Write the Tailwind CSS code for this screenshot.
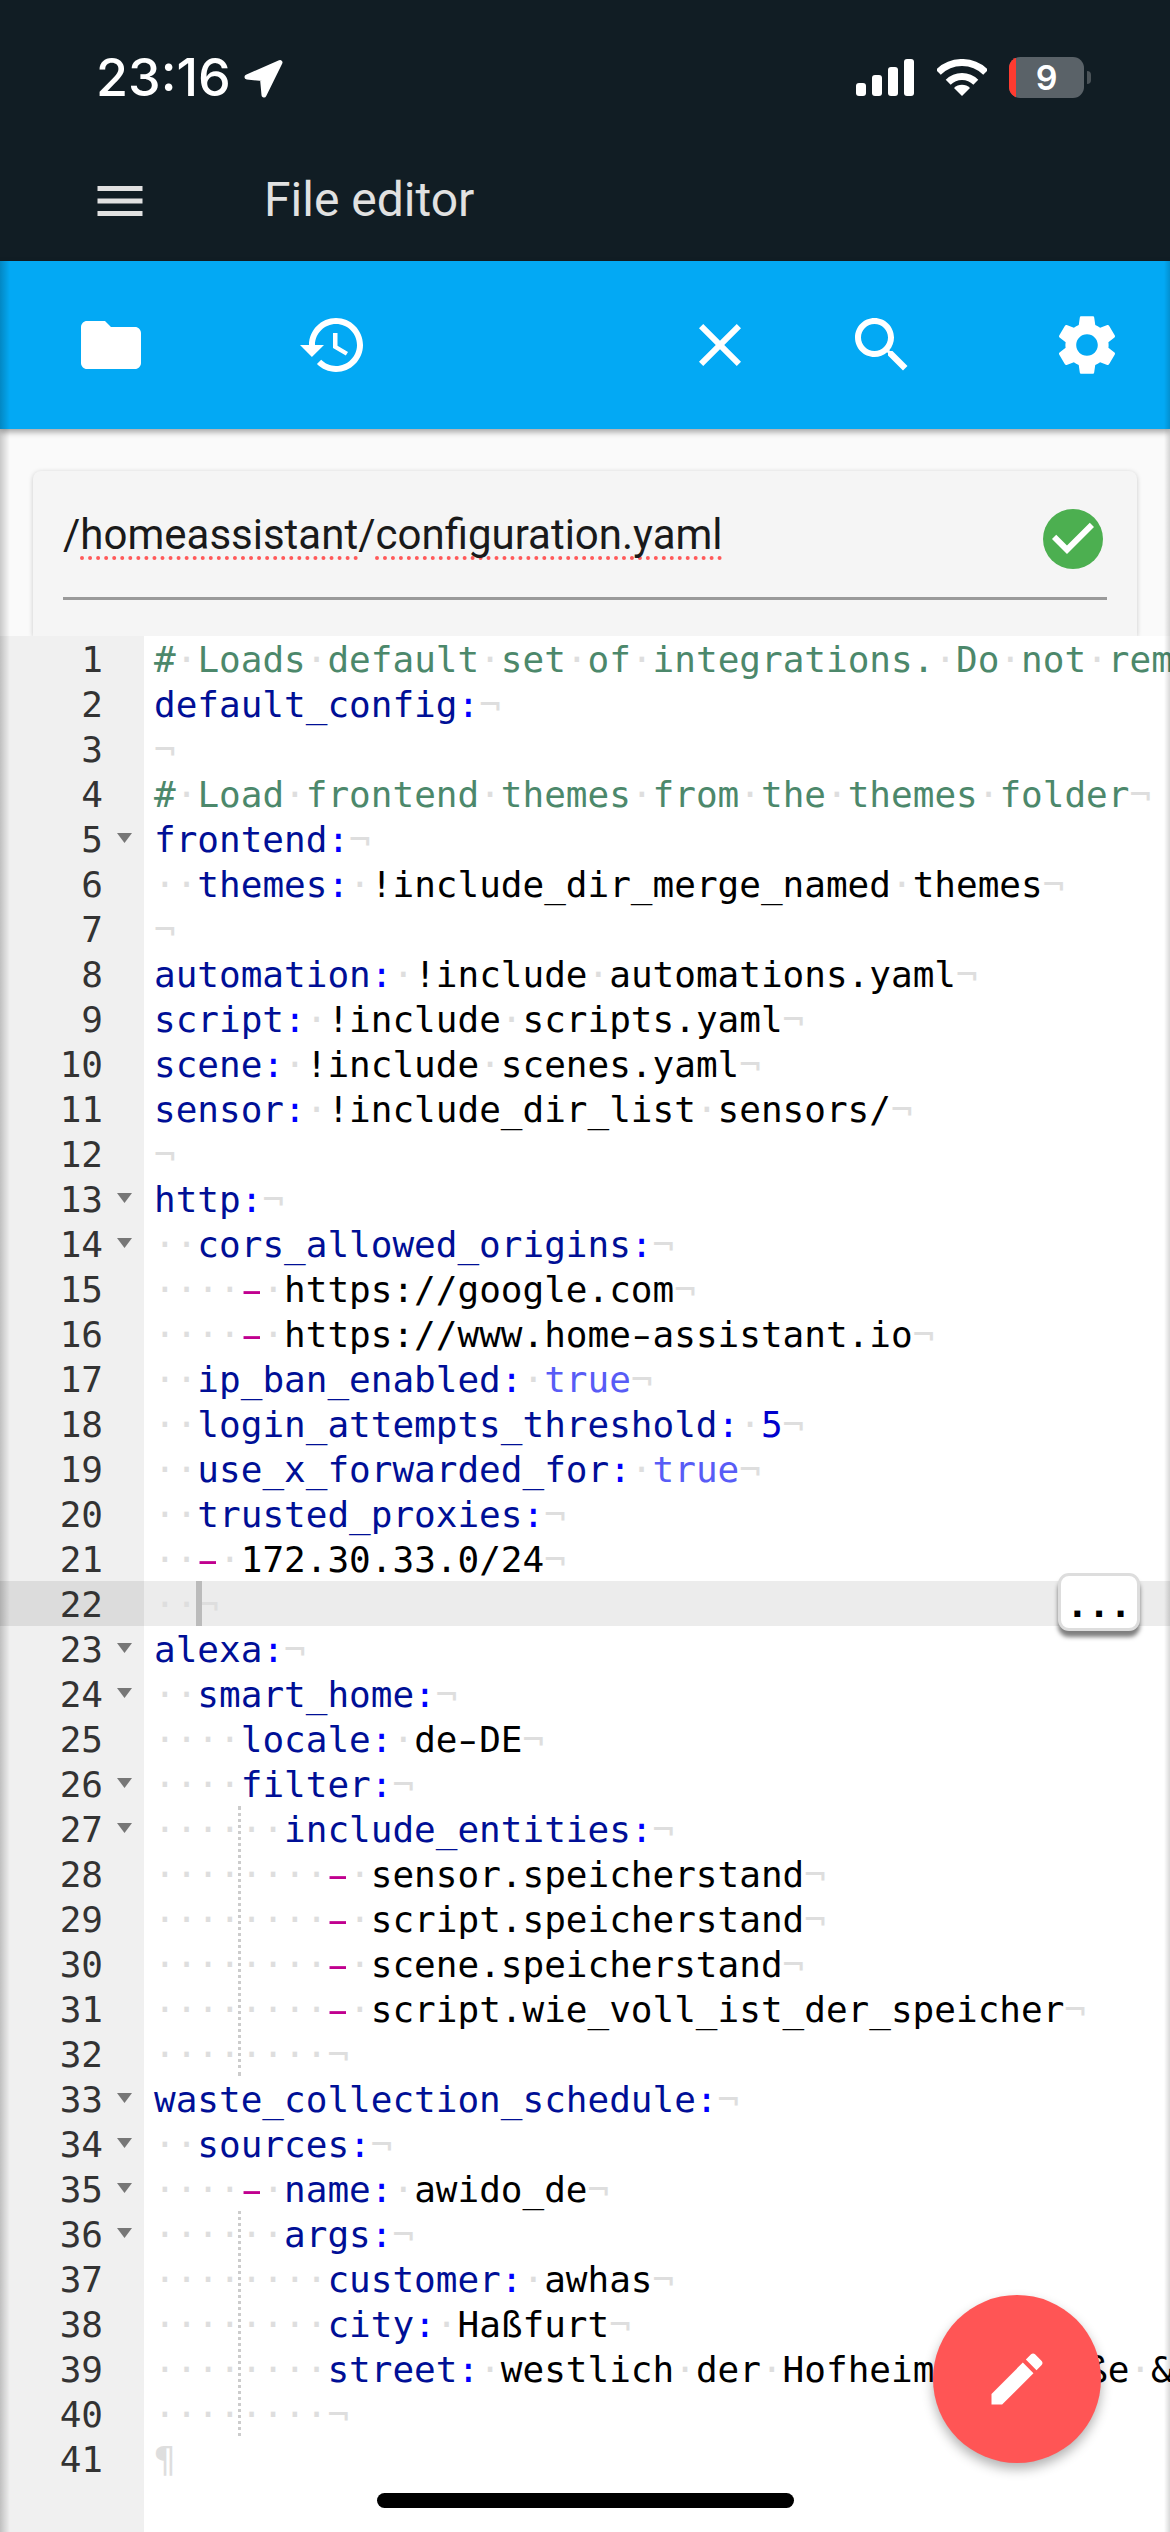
<!DOCTYPE html>
<html lang="en">
  <head>
    <meta charset="UTF-8" />
    <meta name="viewport" content="width=device-width, initial-scale=1.0" />
    <script src="https://cdn.jsdelivr.net/npm/@tailwindcss/browser@4"></script>
    <title>File editor</title>
  </head>
  <body class="relative h-[2532px] overflow-hidden bg-[#fafafa] font-['Roboto',sans-serif]">
    <!-- Status bar + app header -->
    <header class="h-[261px] bg-[#111d24]">
      <div class="flex h-[141px] items-start pl-[96px] pt-[57px] text-white">
        <div class="flex items-center">
          <span class="font-['Inter',sans-serif] text-[52px] leading-[42px] font-medium">23:16</span>
          <svg class="ml-[13px] h-[39px] w-[39px]" viewBox="0 0 39 39" fill="#fff" stroke="#fff" stroke-width="5" stroke-linejoin="round">
            <path d="M3 18 36 3.5 20 36 18.5 19.5Z" />
          </svg>
        </div>
        <div class="ml-auto flex items-start pr-[79px]">
          <div class="mt-[2px] flex h-[37px] items-end gap-[6px]">
            <div class="h-[13px] w-[10px] rounded-[3px] bg-white"></div>
            <div class="h-[21px] w-[10px] rounded-[3px] bg-white"></div>
            <div class="h-[29px] w-[10px] rounded-[3px] bg-white"></div>
            <div class="h-[37px] w-[10px] rounded-[3px] bg-white"></div>
          </div>
          <svg class="mt-[2px] ml-[23px] h-[37px] w-[50px]" viewBox="0 0 50 37" fill="none" stroke="#fff" stroke-width="7">
            <path d="M1.3 13.3A33.5 33.5 0 0 1 48.7 13.3" />
            <path d="M11.2 23.2A19.5 19.5 0 0 1 38.8 23.2" />
            <path d="M25 37 17 29A11.3 11.3 0 0 1 33 29Z" fill="#fff" stroke="none" />
          </svg>
          <div class="relative ml-[22px] flex h-[41px] w-[75px] items-center justify-center overflow-hidden rounded-[11px] bg-[#5a6268]">
            <div class="absolute top-0 left-0 h-full w-[7px] bg-[#ff3b30]"></div>
            <span class="font-['Inter',sans-serif] text-[34px] leading-none font-semibold">9</span>
          </div>
          <div class="mt-[14px] ml-[3px] h-[13px] w-[4px] rounded-r-full bg-[#4b5358]"></div>
        </div>
      </div>
      <div class="flex h-[120px] items-center pl-[90px]">
        <svg class="h-[60px] w-[60px]" viewBox="0 0 24 24" fill="#e1e1e1"><path d="M3 18h18v-2H3v2zm0-5h18v-2H3v2zm0-7v2h18V6H3z" /></svg>
        <span class="mt-[-3px] ml-[114px] text-[48px] text-[#e1e1e1]">File editor</span>
      </div>
    </header>

    <!-- Toolbar -->
    <nav class="relative z-10 flex h-[168px] items-center bg-[#03a9f4] pl-[75px] shadow-[0_3px_6px_rgba(0,0,0,0.35)]">
      <svg class="h-[72px] w-[72px]" viewBox="0 0 24 24" fill="#fff"><path d="M10 4H4c-1.1 0-1.99.9-1.99 2L2 18c0 1.1.9 2 2 2h16c1.1 0 2-.9 2-2V8c0-1.1-.9-2-2-2h-8l-2-2z" /></svg>
      <svg class="ml-[150px] h-[72px] w-[72px]" viewBox="0 0 24 24" fill="#fff"><path d="M13 3c-4.97 0-9 4.03-9 9H1l3.89 3.89.07.14L9 12H6c0-3.87 3.13-7 7-7s7 3.13 7 7-3.13 7-7 7c-1.93 0-3.68-.79-4.94-2.06l-1.42 1.42C8.27 19.99 10.51 21 13 21c4.97 0 9-4.03 9-9s-4.03-9-9-9zm-1 5v5l4.28 2.54.72-1.21-3.5-2.08V8H12z" /></svg>
      <svg class="ml-[315px] h-[72px] w-[72px]" viewBox="0 0 24 24" fill="#fff"><path d="M19 6.41L17.59 5 12 10.59 6.41 5 5 6.41 10.59 12 5 17.59 6.41 19 12 13.41 17.59 19 19 17.59 13.41 12z" /></svg>
      <svg class="ml-[90px] h-[72px] w-[72px]" viewBox="0 0 24 24" fill="#fff"><path d="M15.5 14h-.79l-.28-.27C15.41 12.59 16 11.11 16 9.5 16 5.91 13.09 3 9.5 3S3 5.91 3 9.5 5.91 16 9.5 16c1.61 0 3.09-.59 4.23-1.57l.27.28v.79l5 4.99L20.49 19l-4.99-5zm-6 0C7.01 14 5 11.99 5 9.5S7.01 5 9.5 5 14 7.01 14 9.5 11.99 14 9.5 14z" /></svg>
      <svg class="ml-[133px] h-[72px] w-[72px]" viewBox="0 0 24 24" fill="#fff"><path d="M19.14 12.94c.04-.3.06-.61.06-.94 0-.32-.02-.64-.07-.94l2.03-1.58c.18-.14.23-.41.12-.61l-1.92-3.32c-.12-.22-.37-.29-.59-.22l-2.39.96c-.5-.38-1.03-.7-1.62-.94l-.36-2.54c-.04-.24-.24-.41-.48-.41h-3.84c-.24 0-.43.17-.47.41l-.36 2.54c-.59.24-1.13.57-1.62.94l-2.39-.96c-.22-.08-.47 0-.59.22L2.74 8.87c-.12.21-.08.47.12.61l2.03 1.58c-.05.3-.09.63-.09.94s.02.64.07.94l-2.03 1.58c-.18.14-.23.41-.12.61l1.92 3.32c.12.22.37.29.59.22l2.39-.96c.5.38 1.03.7 1.62.94l.36 2.54c.05.24.24.41.48.41h3.84c.24 0 .44-.17.47-.41l.36-2.54c.59-.24 1.13-.56 1.62-.94l2.39.96c.22.08.47 0 .59-.22l1.92-3.32c.12-.22.07-.47-.12-.61l-2.01-1.58zM12 15.6c-1.98 0-3.6-1.62-3.6-3.6s1.62-3.6 3.6-3.6 3.6 1.62 3.6 3.6-1.62 3.6-3.6 3.6z" /></svg>
    </nav>

    <!-- File path card -->
    <section class="mx-[33px] mt-[42px] h-[165px] rounded-t-lg bg-[#f5f5f5] px-[30px] shadow-[0_1px_5px_rgba(0,0,0,0.2)]">
      <div class="flex h-[129px] items-center justify-between border-b-[3px] border-[#9a9a9a] pr-[5px]">
        <span class="text-[42px] text-[#1a1a1a]">/<span class="underline decoration-[#ff5a5a] decoration-dotted decoration-[4px] underline-offset-[8px] [text-decoration-skip-ink:none]">homeassistant</span>/<span class="underline decoration-[#ff5a5a] decoration-dotted decoration-[4px] underline-offset-[8px] [text-decoration-skip-ink:none]">configuration.yaml</span></span>
        <svg class="mt-[10px] mr-[-1px] h-[60px] w-[60px]" viewBox="2 2 20 20"><circle cx="12" cy="12" r="10" fill="#4caf50" /><path d="M10 17l-5-5 1.41-1.41L10 14.17l7.59-7.59L19 8l-9 9z" fill="#fff" /></svg>
      </div>
    </section>

    <!-- Ace editor -->
    <main class="relative z-[1] flex h-[1896px] bg-white font-['DejaVu_Sans_Mono',monospace] text-[36px] leading-[47px]">
      <div class="w-[144px] shrink-0 bg-[#f0f0f0] text-[#333]">
        <div class="flex h-[45px]"><span class="w-[103px] text-right">1</span></div>
        <div class="flex h-[45px]"><span class="w-[103px] text-right">2</span></div>
        <div class="flex h-[45px]"><span class="w-[103px] text-right">3</span></div>
        <div class="flex h-[45px]"><span class="w-[103px] text-right">4</span></div>
        <div class="flex h-[45px]"><span class="w-[103px] text-right">5</span><span class="mt-[17px] ml-[14px] h-[10px] w-[15px] bg-[#777] [clip-path:polygon(0_0,100%_0,50%_100%)]"></span></div>
        <div class="flex h-[45px]"><span class="w-[103px] text-right">6</span></div>
        <div class="flex h-[45px]"><span class="w-[103px] text-right">7</span></div>
        <div class="flex h-[45px]"><span class="w-[103px] text-right">8</span></div>
        <div class="flex h-[45px]"><span class="w-[103px] text-right">9</span></div>
        <div class="flex h-[45px]"><span class="w-[103px] text-right">10</span></div>
        <div class="flex h-[45px]"><span class="w-[103px] text-right">11</span></div>
        <div class="flex h-[45px]"><span class="w-[103px] text-right">12</span></div>
        <div class="flex h-[45px]"><span class="w-[103px] text-right">13</span><span class="mt-[17px] ml-[14px] h-[10px] w-[15px] bg-[#777] [clip-path:polygon(0_0,100%_0,50%_100%)]"></span></div>
        <div class="flex h-[45px]"><span class="w-[103px] text-right">14</span><span class="mt-[17px] ml-[14px] h-[10px] w-[15px] bg-[#777] [clip-path:polygon(0_0,100%_0,50%_100%)]"></span></div>
        <div class="flex h-[45px]"><span class="w-[103px] text-right">15</span></div>
        <div class="flex h-[45px]"><span class="w-[103px] text-right">16</span></div>
        <div class="flex h-[45px]"><span class="w-[103px] text-right">17</span></div>
        <div class="flex h-[45px]"><span class="w-[103px] text-right">18</span></div>
        <div class="flex h-[45px]"><span class="w-[103px] text-right">19</span></div>
        <div class="flex h-[45px]"><span class="w-[103px] text-right">20</span></div>
        <div class="flex h-[45px]"><span class="w-[103px] text-right">21</span></div>
        <div class="flex h-[45px] bg-[#dcdcdc]"><span class="w-[103px] text-right">22</span></div>
        <div class="flex h-[45px]"><span class="w-[103px] text-right">23</span><span class="mt-[17px] ml-[14px] h-[10px] w-[15px] bg-[#777] [clip-path:polygon(0_0,100%_0,50%_100%)]"></span></div>
        <div class="flex h-[45px]"><span class="w-[103px] text-right">24</span><span class="mt-[17px] ml-[14px] h-[10px] w-[15px] bg-[#777] [clip-path:polygon(0_0,100%_0,50%_100%)]"></span></div>
        <div class="flex h-[45px]"><span class="w-[103px] text-right">25</span></div>
        <div class="flex h-[45px]"><span class="w-[103px] text-right">26</span><span class="mt-[17px] ml-[14px] h-[10px] w-[15px] bg-[#777] [clip-path:polygon(0_0,100%_0,50%_100%)]"></span></div>
        <div class="flex h-[45px]"><span class="w-[103px] text-right">27</span><span class="mt-[17px] ml-[14px] h-[10px] w-[15px] bg-[#777] [clip-path:polygon(0_0,100%_0,50%_100%)]"></span></div>
        <div class="flex h-[45px]"><span class="w-[103px] text-right">28</span></div>
        <div class="flex h-[45px]"><span class="w-[103px] text-right">29</span></div>
        <div class="flex h-[45px]"><span class="w-[103px] text-right">30</span></div>
        <div class="flex h-[45px]"><span class="w-[103px] text-right">31</span></div>
        <div class="flex h-[45px]"><span class="w-[103px] text-right">32</span></div>
        <div class="flex h-[45px]"><span class="w-[103px] text-right">33</span><span class="mt-[17px] ml-[14px] h-[10px] w-[15px] bg-[#777] [clip-path:polygon(0_0,100%_0,50%_100%)]"></span></div>
        <div class="flex h-[45px]"><span class="w-[103px] text-right">34</span><span class="mt-[17px] ml-[14px] h-[10px] w-[15px] bg-[#777] [clip-path:polygon(0_0,100%_0,50%_100%)]"></span></div>
        <div class="flex h-[45px]"><span class="w-[103px] text-right">35</span><span class="mt-[17px] ml-[14px] h-[10px] w-[15px] bg-[#777] [clip-path:polygon(0_0,100%_0,50%_100%)]"></span></div>
        <div class="flex h-[45px]"><span class="w-[103px] text-right">36</span><span class="mt-[17px] ml-[14px] h-[10px] w-[15px] bg-[#777] [clip-path:polygon(0_0,100%_0,50%_100%)]"></span></div>
        <div class="flex h-[45px]"><span class="w-[103px] text-right">37</span></div>
        <div class="flex h-[45px]"><span class="w-[103px] text-right">38</span></div>
        <div class="flex h-[45px]"><span class="w-[103px] text-right">39</span></div>
        <div class="flex h-[45px]"><span class="w-[103px] text-right">40</span></div>
        <div class="flex h-[45px]"><span class="w-[103px] text-right">41</span></div>
      </div>

      <div class="relative min-w-0 flex-1 overflow-hidden text-black [&_b]:font-normal [&_b]:text-[#000f96] [&_em]:text-[#0000ff] [&_em]:not-italic [&_i]:text-[#dedede] [&_i]:not-italic [&_s]:inline-block [&_s]:scale-x-[1.5] [&_s]:no-underline [&_u]:inline-block [&_u]:scale-x-[1.8] [&_u]:text-[#c0008f] [&_u]:no-underline [&>div]:h-[45px] [&>div]:whitespace-pre [&>div]:pl-[10px]">
        <div class="text-[#4c886b]">#<i>·</i>Loads<i>·</i>default<i>·</i>set<i>·</i>of<i>·</i>integrations.<i>·</i>Do<i>·</i>not<i>·</i>rem</div>
        <div><b>default_config</b><em>:</em><i>¬</i></div>
        <div><i>¬</i></div>
        <div class="text-[#4c886b]">#<i>·</i>Load<i>·</i>frontend<i>·</i>themes<i>·</i>from<i>·</i>the<i>·</i>themes<i>·</i>folder<i>¬</i></div>
        <div><b>frontend</b><em>:</em><i>¬</i></div>
        <div><i>··</i><b>themes</b><em>:</em><i>·</i>!include_dir_merge_named<i>·</i>themes<i>¬</i></div>
        <div><i>¬</i></div>
        <div><b>automation</b><em>:</em><i>·</i>!include<i>·</i>automations.yaml<i>¬</i></div>
        <div><b>script</b><em>:</em><i>·</i>!include<i>·</i>scripts.yaml<i>¬</i></div>
        <div><b>scene</b><em>:</em><i>·</i>!include<i>·</i>scenes.yaml<i>¬</i></div>
        <div><b>sensor</b><em>:</em><i>·</i>!include_dir_list<i>·</i>sensors/<i>¬</i></div>
        <div><i>¬</i></div>
        <div><b>http</b><em>:</em><i>¬</i></div>
        <div><i>··</i><b>cors_allowed_origins</b><em>:</em><i>¬</i></div>
        <div><i>····</i><u>-</u><i>·</i>https://google.com<i>¬</i></div>
        <div><i>····</i><u>-</u><i>·</i>https://www.home<s>-</s>assistant.io<i>¬</i></div>
        <div><i>··</i><b>ip_ban_enabled</b><em>:</em><i>·</i><span class="text-[#585cf6]">true</span><i>¬</i></div>
        <div><i>··</i><b>login_attempts_threshold</b><em>:</em><i>·</i><span class="text-[#0000cd]">5</span><i>¬</i></div>
        <div><i>··</i><b>use_x_forwarded_for</b><em>:</em><i>·</i><span class="text-[#585cf6]">true</span><i>¬</i></div>
        <div><i>··</i><b>trusted_proxies</b><em>:</em><i>¬</i></div>
        <div><i>··</i><u>-</u><i>·</i>172.30.33.0/24<i>¬</i></div>
        <div class="relative bg-[#ececec]"><i>··¬</i><span class="absolute top-0 left-[52px] h-full w-[6px] bg-[#bbb]"></span></div>
        <div><b>alexa</b><em>:</em><i>¬</i></div>
        <div><i>··</i><b>smart_home</b><em>:</em><i>¬</i></div>
        <div><i>····</i><b>locale</b><em>:</em><i>·</i>de<s>-</s>DE<i>¬</i></div>
        <div><i>····</i><b>filter</b><em>:</em><i>¬</i></div>
        <div><i>······</i><b>include_entities</b><em>:</em><i>¬</i></div>
        <div><i>········</i><u>-</u><i>·</i>sensor.speicherstand<i>¬</i></div>
        <div><i>········</i><u>-</u><i>·</i>script.speicherstand<i>¬</i></div>
        <div><i>········</i><u>-</u><i>·</i>scene.speicherstand<i>¬</i></div>
        <div><i>········</i><u>-</u><i>·</i>script.wie_voll_ist_der_speicher<i>¬</i></div>
        <div><i>········¬</i></div>
        <div><b>waste_collection_schedule</b><em>:</em><i>¬</i></div>
        <div><i>··</i><b>sources</b><em>:</em><i>¬</i></div>
        <div><i>····</i><u>-</u><i>·</i><b>name</b><em>:</em><i>·</i>awido_de<i>¬</i></div>
        <div><i>······</i><b>args</b><em>:</em><i>¬</i></div>
        <div><i>········</i><b>customer</b><em>:</em><i>·</i>awhas<i>¬</i></div>
        <div><i>········</i><b>city</b><em>:</em><i>·</i>Haßfurt<i>¬</i></div>
        <div><i>········</i><b>street</b><em>:</em><i>·</i>westlich<i>·</i>der<i>·</i>Hofheimer<i>·</i>Straße<i>·</i>&amp;</div>
        <div><i>········¬</i></div>
        <div><i>¶</i></div>
        <!-- indent guides -->
        <span class="absolute top-[1170px] left-[94px] h-[270px] border-l-[3px] border-dotted border-[#ccc]"></span>
        <span class="absolute top-[1575px] left-[94px] h-[225px] border-l-[3px] border-dotted border-[#ccc]"></span>
      </div>
    </main>

    <!-- Overlays -->
    <div class="absolute top-[261px] bottom-0 left-0 z-20 w-[10px] bg-gradient-to-r from-black/20 to-transparent"></div>
    <div class="absolute top-[261px] right-0 bottom-0 z-20 w-[6px] bg-gradient-to-l from-black/15 to-transparent"></div>
    <button class="absolute top-[1573px] left-[1058px] z-20 h-[58px] w-[82px] rounded-[11px] border-[3px] border-[#ddd] bg-white pt-[6px] font-['DejaVu_Sans_Mono',monospace] text-[36px] leading-none font-bold text-black shadow-[0_6px_4px_rgba(0,0,0,0.5)]">...</button>
    <button class="absolute top-[2295px] left-[933px] z-20 flex h-[168px] w-[168px] items-center justify-center rounded-full bg-[#ff5555] shadow-[0_6px_12px_rgba(0,0,0,0.3)]">
      <svg class="h-[68px] w-[68px]" viewBox="0 0 24 24" fill="#fff"><path d="M3 17.25V21h3.75L17.81 9.94l-3.75-3.75L3 17.25zM20.71 7.04c.39-.39.39-1.02 0-1.41l-2.34-2.34c-.39-.39-1.02-.39-1.41 0l-1.83 1.83 3.75 3.75 1.83-1.83z" /></svg>
    </button>
    <div class="absolute top-[2493px] left-[377px] z-20 h-[15px] w-[417px] rounded-full bg-black"></div>
  </body>
</html>
